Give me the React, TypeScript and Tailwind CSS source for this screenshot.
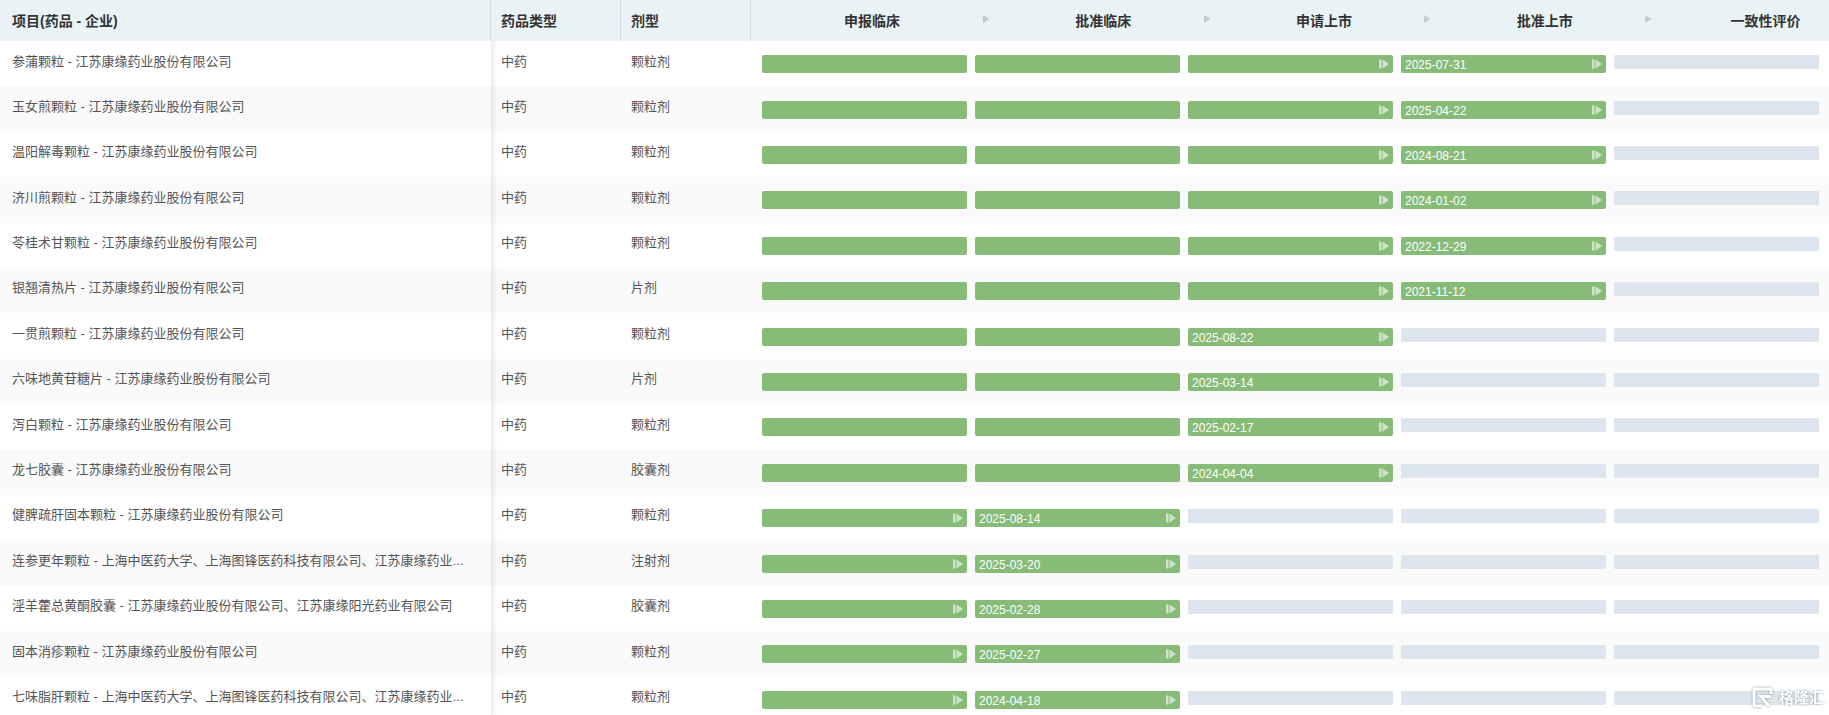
import React from "react";

const FONT = "font-['Liberation_Sans','Noto_Sans_CJK_SC',sans-serif]";

interface DrugRow {
  name: string;
  form: string;
  stage: number; // index of the stage that carries the date
  date: string;
}

const stages = ["申报临床", "批准临床", "申请上市", "批准上市", "一致性评价"];

const KY = "江苏康缘药业股份有限公司";
const JOINT = "上海中医药大学、上海图锋医药科技有限公司、江苏康缘药业...";

const rows: DrugRow[] = [
  { name: `参蒲颗粒 - ${KY}`, form: "颗粒剂", stage: 3, date: "2025-07-31" },
  { name: `玉女煎颗粒 - ${KY}`, form: "颗粒剂", stage: 3, date: "2025-04-22" },
  { name: `温阳解毒颗粒 - ${KY}`, form: "颗粒剂", stage: 3, date: "2024-08-21" },
  { name: `济川煎颗粒 - ${KY}`, form: "颗粒剂", stage: 3, date: "2024-01-02" },
  { name: `苓桂术甘颗粒 - ${KY}`, form: "颗粒剂", stage: 3, date: "2022-12-29" },
  { name: `银翘清热片 - ${KY}`, form: "片剂", stage: 3, date: "2021-11-12" },
  { name: `一贯煎颗粒 - ${KY}`, form: "颗粒剂", stage: 2, date: "2025-08-22" },
  { name: `六味地黄苷糖片 - ${KY}`, form: "片剂", stage: 2, date: "2025-03-14" },
  { name: `泻白颗粒 - ${KY}`, form: "颗粒剂", stage: 2, date: "2025-02-17" },
  { name: `龙七胶囊 - ${KY}`, form: "胶囊剂", stage: 2, date: "2024-04-04" },
  { name: `健脾疏肝固本颗粒 - ${KY}`, form: "颗粒剂", stage: 1, date: "2025-08-14" },
  { name: `连参更年颗粒 - ${JOINT}`, form: "注射剂", stage: 1, date: "2025-03-20" },
  {
    name: `淫羊藿总黄酮胶囊 - ${KY}、江苏康缘阳光药业有限公司`,
    form: "胶囊剂",
    stage: 1,
    date: "2025-02-28",
  },
  { name: `固本消疹颗粒 - ${KY}`, form: "颗粒剂", stage: 1, date: "2025-02-27" },
  { name: `七味脂肝颗粒 - ${JOINT}`, form: "颗粒剂", stage: 1, date: "2024-04-18" },
];

const StepArrow = () => (
  <svg width="10" height="10" viewBox="0 0 10 10" className="shrink-0 opacity-60">
    <rect x="0" y="0.5" width="2.5" height="9" fill="#ffffff" />
    <path d="M3.5 0.5 L10 5 L3.5 9.5 Z" fill="#ffffff" />
  </svg>
);

const StageBar = ({ row, index }: { row: DrugRow; index: number }) => {
  if (index > row.stage) {
    return <div className="h-3.5 w-[205px] shrink-0 rounded-[1px] bg-[#dde6ee]" />;
  }
  const isCurrent = index === row.stage;
  // the 申请上市 rows carry no arrow on the bar before the date
  const showArrow = isCurrent || (index === row.stage - 1 && row.stage !== 2);
  return (
    <div className="flex h-[18px] w-[205px] shrink-0 items-center justify-between rounded-[2px] bg-[#87bb78] pr-1 pl-1">
      <span className="pt-0.5 text-xs leading-none text-white">{isCurrent ? row.date : ""}</span>
      {showArrow && <StepArrow />}
    </div>
  );
};

export default function App() {
  return (
    <div className={`relative h-[715px] w-[1829px] overflow-hidden bg-white ${FONT}`}>
      <div className="flex h-[41px] bg-[#e9f3f5] text-sm leading-none font-bold text-[#333]">
        <div className="flex w-[491px] shrink-0 items-center border-r border-[#cfdfe2] pl-3">
          项目(药品 - 企业)
        </div>
        <div className="flex w-[130px] shrink-0 items-center border-r border-[#cfdfe2] pl-2.5">
          药品类型
        </div>
        <div className="flex w-[130px] shrink-0 items-center border-r border-[#cfdfe2] pl-2.5">
          剂型
        </div>
        {stages.map((s, i) => (
          <div
            key={s}
            className={`relative flex shrink-0 items-center justify-center ${i === 0 ? "w-[242px]" : "w-[220.7px]"}`}
          >
            {s}
            {i < 4 && (
              <svg width="7" height="8" viewBox="0 0 7 8" className="absolute top-[15px] right-[3px]">
                <path d="M0 0 L6.5 4 L0 8 Z" fill="#c4c9cc" />
              </svg>
            )}
          </div>
        ))}
      </div>

      {rows.map((row, r) => (
        <div
          key={row.name}
          className={`flex h-[45.4px] text-[13px] text-[#555] ${r % 2 === 1 ? "bg-[#fafafa]" : "bg-white"}`}
        >
          <div className="w-[491px] shrink-0 pt-[10.5px] pl-3 leading-5">{row.name}</div>
          <div className="w-[130px] shrink-0 pt-[10.5px] pl-2.5 leading-5">中药</div>
          <div className="w-[130px] shrink-0 pt-[10.5px] pl-2.5 leading-5">{row.form}</div>
          <div className="flex flex-1 gap-2 pt-[14.3px] pl-[11px]">
            {stages.map((s, i) => (
              <StageBar key={s} row={row} index={i} />
            ))}
          </div>
        </div>
      ))}

      {/* fixed column shadow */}
      <div className="absolute top-[41px] bottom-0 left-[491px] w-1.5 bg-gradient-to-r from-[#00000014] to-transparent" />

      <div className="absolute top-[687px] left-[1752px] flex items-center gap-1.5 drop-shadow-[0_0_1px_#8a949c]">
        <svg width="21" height="21" viewBox="0 0 21 21" fill="none">
          <path d="M19 7 V3.5 Q19 2 17.5 2 H3.5 Q2 2 2 3.5 V17.5 Q2 19 3.5 19 H10" stroke="#ffffff" strokeWidth="3" />
          <path d="M19 9.5 H9 L17 19" stroke="#ffffff" strokeWidth="3" />
        </svg>
        <span className="text-[15px] leading-none font-bold text-white">格隆汇</span>
      </div>
    </div>
  );
}
